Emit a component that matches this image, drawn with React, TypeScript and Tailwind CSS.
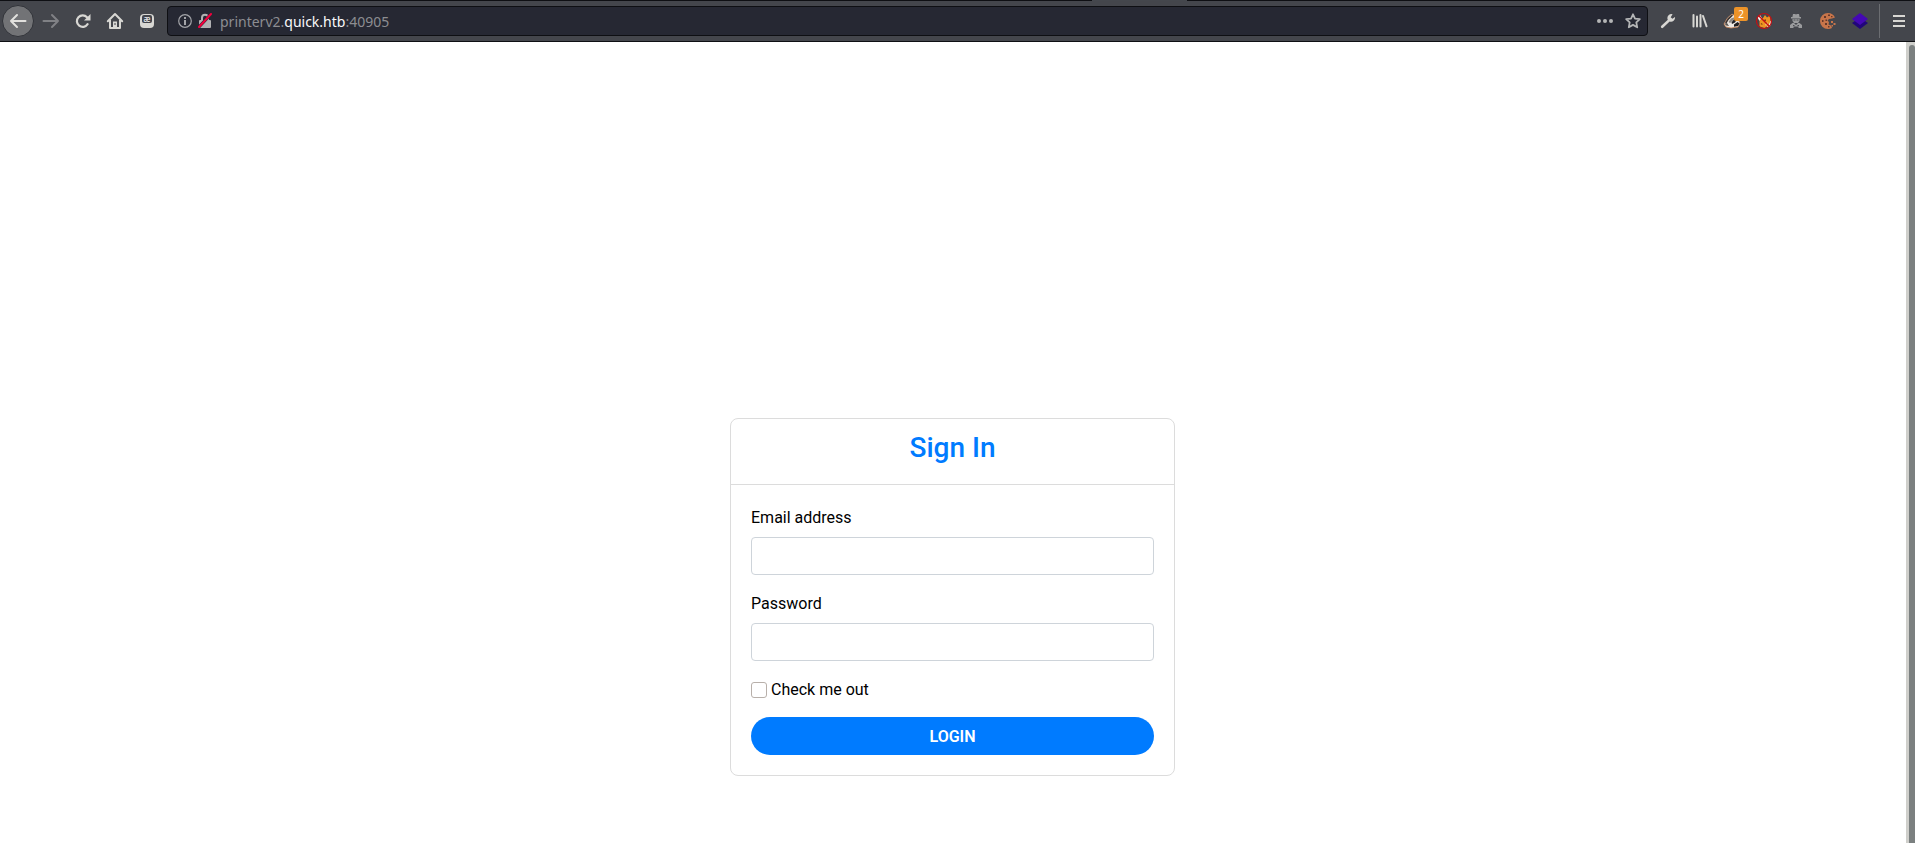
import type { ReactNode } from 'react';

function ToolButton({ label, children }: { label: string; children: ReactNode }) {
  return (
    <button
      type="button"
      aria-label={label}
      className="relative flex size-8 shrink-0 items-center justify-center text-[#d8d7d3]"
    >
      {children}
    </button>
  );
}

function BackIcon() {
  return (
    <svg width="18" height="18" viewBox="0 0 18 18" fill="none" stroke="currentColor" strokeWidth="2" strokeLinecap="round" strokeLinejoin="round">
      <path d="M16.5 9H2M8 3L2 9l6 6" />
    </svg>
  );
}

function ForwardIcon() {
  return (
    <svg width="18" height="18" viewBox="0 0 18 18" fill="none" stroke="currentColor" strokeWidth="2" strokeLinecap="round" strokeLinejoin="round">
      <path d="M1.5 9H16M10 3l6 6-6 6" />
    </svg>
  );
}

function ReloadIcon() {
  return (
    <svg width="16" height="16" viewBox="0 0 16 16" fill="none">
      <path d="M12.6 11.2A5.8 5.8 0 1 1 12 4.2" stroke="currentColor" strokeWidth="2.2" strokeLinecap="round" />
      <path d="M15.5 1v6.5H9z" fill="currentColor" />
    </svg>
  );
}

function HomeIcon() {
  return (
    <svg width="18" height="18" viewBox="0 0 18 18" fill="none">
      <path d="M1.8 9.2L9 2l7.2 7.2" stroke="currentColor" strokeWidth="2" strokeLinecap="round" strokeLinejoin="round" />
      <path d="M4 8v8h10V8" stroke="currentColor" strokeWidth="2" strokeLinejoin="round" />
      <path d="M7 9.500h4V16H7z" fill="currentColor" />
      <path d="M8.500 11h1v2h-1z" fill="#42444b" />
    </svg>
  );
}

function InfoIcon() {
  return (
    <svg width="14" height="14" viewBox="0 0 14 14" fill="none" className="shrink-0">
      <circle cx="7" cy="7" r="6.3" stroke="#a3a4a8" strokeWidth="1.2" />
      <path d="M6 6h2v5H6zM6 3h2v2H6z" fill="#a3a4a8" />
    </svg>
  );
}

function InsecureIcon() {
  return (
    <svg width="14" height="16" viewBox="0 0 14 16" fill="none" className="shrink-0">
      <path d="M4 8V4.8a3 3 0 0 1 6 0V8" stroke="#b1b1b3" strokeWidth="2" />
      <rect x="1" y="7" width="12" height="8" rx="1" fill="#b1b1b3" />
      <path d="M1 14L13 1" stroke="#262833" strokeWidth="3" />
      <path d="M1 14L13 1" stroke="#f3003d" strokeWidth="2" strokeLinecap="round" />
    </svg>
  );
}

function StarIcon() {
  return (
    <svg width="16" height="16" viewBox="0 0 16 16" fill="none">
      <path
        d="M8 1.3l2 4.3 4.8.6-3.5 3.2.9 4.9L8 11.9l-4.2 2.4.9-4.9L1.2 6.2 6 5.6z"
        stroke="#b4b5b6"
        strokeWidth="1.8"
        strokeLinejoin="round"
      />
    </svg>
  );
}

function WrenchIcon() {
  return (
    <svg width="16" height="16" viewBox="0 0 16 16" fill="none">
      <path d="M2.2 13.8L9 7.4" stroke="currentColor" strokeWidth="2.6" strokeLinecap="round" />
      <path
        d="M12.6 1.2a4.1 4.1 0 0 0-5 5.2l2.1 2.2a4.1 4.1 0 0 0 5.3-4.6l-2.6 1.8-1.7-1.6z"
        fill="currentColor"
      />
    </svg>
  );
}

function LibraryIcon() {
  return (
    <svg width="16" height="16" viewBox="0 0 16 16" fill="none" stroke="currentColor" strokeWidth="2" strokeLinecap="round">
      <path d="M1.500 2v11.500M5 3.500v10M8.500 2v11.500M11 3l3.500 10.300" />
    </svg>
  );
}

function BadgerIcon() {
  return (
    <svg width="18" height="16" viewBox="0 0 18 16">
      <path d="M1 11L4.500 5 9 1l5 3 3 6-2 4-7 1-5-1z" fill="#ece7e2" stroke="#cf8757" strokeWidth="0.8" />
      <path d="M2 9.500L5 5l4-3.500 1 1-4.500 4.500-2 3.500z" fill="#3b3432" />
      <path d="M5.500 9L8 5.500l4-1.500-2.500 4L7 10z" fill="#8c8783" />
      <path d="M8.500 9.500l3-4 2.500.5-2 3.500-3 1.500z" fill="#242326" />
      <path d="M11 11.500l3.500-2.500 2 1.500-1.500 2.500-4 .8z" fill="#1f1e20" />
      <path d="M1.500 10.500l2.500-.5 2 3-3-.5z" fill="#5b5653" />
    </svg>
  );
}

function FoxIcon() {
  return (
    <svg width="18" height="18" viewBox="0 0 18 18" fill="none">
      <path d="M2.500 5.500L5 3l2 3-2.500 3zM13 8l3.500 1.500-1.500 5-3 1z" fill="#f3efea" />
      <path d="M4.500 8.500L8 6l2-3 2 2.500 3-2 .5 5.500-2 4.500-4 2.500-5-1.500z" fill="#ee9422" />
      <path d="M8.500 8.500l2-1.500.5 2.200zM5.500 12l1.500-1 .5 2z" fill="#6f3d12" />
      <path d="M10.500 11.500l2.500-1-.5 2.500-2 .5z" fill="#f8d9a8" />
      <circle cx="9" cy="9" r="7.500" stroke="#c50f12" strokeWidth="1.200" />
      <path d="M3.700 3.700l10.600 10.600" stroke="#c50f12" strokeWidth="1.400" />
    </svg>
  );
}

function SpyIcon() {
  return (
    <svg width="14" height="16" viewBox="0 0 14 16">
      <path d="M4 1h2l1 .6L8 1h2l.6 3H12v1.500H2V4h1.400z" fill="#9a9b9d" />
      <path d="M3.500 6h7v2L9 10H5L3.500 8z" fill="#9a9b9d" />
      <path d="M1 15v-3l2.500-2H5l2 2 2-2h1.500l2.500 2v3H9.500v-1.500h-5V15z" fill="#9a9b9d" />
      <path d="M4.500 6.500h2v1h-2zM7.500 6.500h2v1h-2zM4 12h1.500v1H4zM8.500 12H10v1H8.500z" fill="#4a4c52" />
    </svg>
  );
}

function CookieIcon() {
  return (
    <svg width="18" height="18" viewBox="0 0 18 18">
      <path
        d="M9 1a8 8 0 0 0 0 16c1.500 0 2.800-.3 4-1l-1-2.500-2.500-1L10 10 8.500 8.500 10 7l3-.5 3-1A8 8 0 0 0 9 1z"
        fill="#c8754a"
      />
      <path d="M12 9h2v2h-2zM14.500 11h2v2h-2zM12.500 13H14v1.500h-1.500z" fill="#c8754a" />
      <path
        d="M5 4h2v2H5zM9 2.500h2V4H9zM3 8h1.500v2H3zM6 11h2v2H6zM9 14h1.500v1.500H9zM6.500 7.500h1.500V9H6.500zM12 4h1.500v1.200H12z"
        fill="#66392a"
      />
    </svg>
  );
}

function LayersIcon() {
  return (
    <svg width="16" height="16" viewBox="0 0 16 16">
      <path d="M0 10l3-2h10l3 2-8 6z" fill="#21067a" />
      <path d="M8 0l8 6-8 6-8-6z" fill="#4508b4" />
    </svg>
  );
}

function BrowserBar() {
  return (
    <header>
      <div className="flex h-px">
        <div className="w-[57%] bg-[#0e0f13]" />
        <div className="w-[5%] bg-[#44474d]" />
        <div className="flex-1 bg-[#0e0f13]" />
      </div>
      <nav className="box-content flex h-10 items-center border-b border-[#0e0f13] bg-[#44464c]">
        <button
          type="button"
          aria-label="Back"
          className="mr-px ml-0.5 flex size-8 shrink-0 items-center justify-center rounded-full border border-[#313339] bg-[#727376] text-[#e2e1de]"
        >
          <BackIcon />
        </button>
        <button
          type="button"
          aria-label="Forward"
          disabled
          className="flex size-8 shrink-0 items-center justify-center text-[#808185]"
        >
          <ForwardIcon />
        </button>
        <ToolButton label="Reload">
          <ReloadIcon />
        </ToolButton>
        <ToolButton label="Home">
          <HomeIcon />
        </ToolButton>
        <ToolButton label="Character palette">
          <span className="flex size-[14px] items-start justify-center rounded-sm bg-[#d8d7d3]">
            <span className="mt-px flex h-2 w-[10px] items-center justify-center rounded-xs bg-[#42444b] font-['Noto_Sans',sans-serif] text-[8px] leading-none text-white">
              æ
            </span>
          </span>
        </ToolButton>

        <div className="mx-1 flex h-[30px] flex-1 items-center rounded-[4px] border border-[#0e0f13] bg-[#262833] pl-[10px] font-['Noto_Sans',sans-serif] text-[14px]">
          <InfoIcon />
          <span className="ml-1.5 flex">
            <InsecureIcon />
          </span>
          <p className="ml-2 flex-1 text-[#8c8d91]">
            printerv2.<span className="text-[#f9f9fa]">quick.htb</span>:40905
          </p>
          <button type="button" aria-label="Page actions" className="flex size-7 items-center justify-center gap-0.5">
            <span className="size-1 rounded-full bg-[#b4b5b6]" />
            <span className="size-1 rounded-full bg-[#b4b5b6]" />
            <span className="size-1 rounded-full bg-[#b4b5b6]" />
          </button>
          <button type="button" aria-label="Bookmark" className="flex size-7 items-center justify-center">
            <StarIcon />
          </button>
        </div>

        <div className="flex items-center">
          <ToolButton label="Developer tools">
            <WrenchIcon />
          </ToolButton>
          <ToolButton label="Library">
            <LibraryIcon />
          </ToolButton>
          <ToolButton label="Privacy Badger">
            <BadgerIcon />
            <span className="absolute top-0.5 right-0 flex size-[14px] items-center justify-center rounded-xs bg-[#ec9329] font-['Noto_Sans',sans-serif] text-[10px] leading-none text-white">
              2
            </span>
          </ToolButton>
          <ToolButton label="Proxy">
            <FoxIcon />
          </ToolButton>
          <ToolButton label="User agent">
            <SpyIcon />
          </ToolButton>
          <ToolButton label="Cookies">
            <CookieIcon />
          </ToolButton>
          <ToolButton label="Layers">
            <LayersIcon />
          </ToolButton>
        </div>
        <div className="mx-[3px] h-[34px] w-px bg-[#6b6d71]" />
        <ToolButton label="Menu">
          <svg width="12" height="12" viewBox="0 0 12 12" fill="currentColor">
            <path d="M0 0h12v2H0zM0 5h12v2H0zM0 10h12v2H0z" />
          </svg>
        </ToolButton>
      </nav>
    </header>
  );
}

function TextField({ id, label, type }: { id: string; label: string; type: string }) {
  return (
    <div className="mb-4">
      <label htmlFor={id} className="mb-[6px] block leading-[26px]">
        {label}
      </label>
      <input
        id={id}
        type={type}
        className="block h-[38px] w-full rounded-[4px] border border-[#ced4da] bg-white px-3"
      />
    </div>
  );
}

function SignInCard() {
  return (
    <section className="w-full max-w-[445px] rounded-[8px] border border-[#dcdcdc] bg-white">
      <div className="border-b border-[#dcdcdc] px-5 pt-3 pb-5">
        <h1 className="text-center text-[28px] leading-[33px] font-medium text-[#007bff]">Sign In</h1>
      </div>
      <form className="p-5" onSubmit={(e) => e.preventDefault()}>
        <TextField id="email" label="Email address" type="email" />
        <TextField id="password" label="Password" type="password" />
        <div className="mb-[14px] flex items-center gap-1 leading-[26px]">
          <input
            id="check"
            type="checkbox"
            className="size-4 appearance-none rounded-[3px] border border-[#b8b0aa] bg-white"
          />
          <label htmlFor="check">Check me out</label>
        </div>
        <button type="submit" className="h-[38px] w-full rounded-full bg-[#007bff] pt-0.5 font-semibold text-white">
          LOGIN
        </button>
      </form>
    </section>
  );
}

export default function App() {
  return (
    <div className="flex h-screen flex-col overflow-hidden bg-white">
      <BrowserBar />
      <div className="flex min-h-0 flex-1">
        <main className="flex flex-1 items-start justify-center pt-[376px] pr-px font-[Roboto,sans-serif] text-base text-black">
          <SignInCard />
        </main>
        <div className="flex w-[9px] flex-col bg-[#cfcfcb] pt-[3px] pl-[3px]">
          <div className="flex-1 rounded-t-full bg-[#7b8080]" />
        </div>
      </div>
    </div>
  );
}
